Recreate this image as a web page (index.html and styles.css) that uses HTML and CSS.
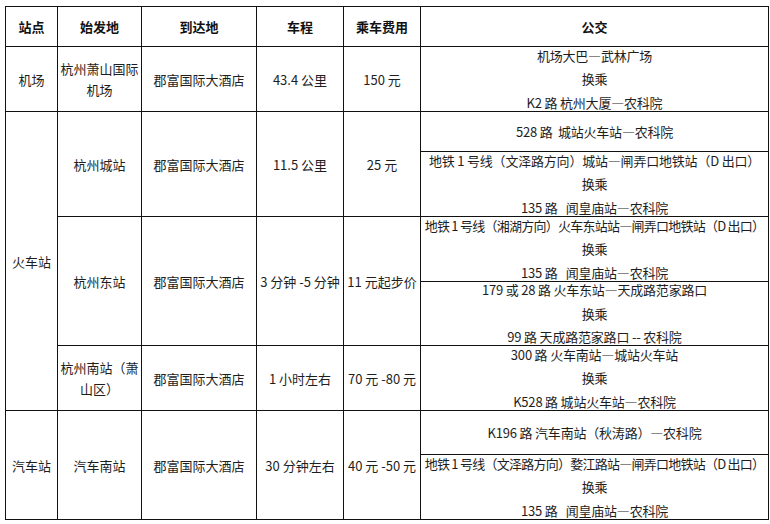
FILE: index.html
```html
<!DOCTYPE html>
<html lang="zh-CN">
<head>
<meta charset="utf-8">
<title>交通路线</title>
<link rel="stylesheet" href="styles.css">
</head>
<body>
<table class="routes">
  <colgroup>
    <col class="c-site">
    <col class="c-from">
    <col class="c-to">
    <col class="c-dist">
    <col class="c-fee">
    <col class="c-bus">
  </colgroup>
  <thead>
    <tr class="r-head">
      <th>站点</th><th>始发地</th><th>到达地</th><th>车程</th><th>乘车费用</th><th>公交</th>
    </tr>
  </thead>
  <tbody>
    <tr class="r-65">
      <td>机场</td>
      <td class="wrap">杭州萧山国际<br>机场</td>
      <td>郡富国际大酒店</td>
      <td>43.4 公里</td>
      <td>150 元</td>
      <td class="bus"><div class="lines"><span>机场大巴—武林广场</span><span>换乘</span><span>K2 路 杭州大厦—农科院</span></div></td>
    </tr>
    <tr class="r-40">
      <td rowspan="5">火车站</td>
      <td rowspan="2">杭州城站</td>
      <td rowspan="2">郡富国际大酒店</td>
      <td rowspan="2">11.5 公里</td>
      <td rowspan="2">25 元</td>
      <td class="bus">528 路&nbsp; 城站火车站—农科院</td>
    </tr>
    <tr class="r-65">
      <td class="bus"><div class="lines"><span>地铁 1 号线（文泽路方向）城站—闸弄口地铁站（D 出口）</span><span>换乘</span><span>135 路&nbsp;&nbsp; 闻皇庙站—农科院</span></div></td>
    </tr>
    <tr class="r-65">
      <td rowspan="2">杭州东站</td>
      <td rowspan="2">郡富国际大酒店</td>
      <td rowspan="2">3 分钟 -5 分钟</td>
      <td rowspan="2">11 元起步价</td>
      <td class="bus"><div class="lines"><span class="tight">地铁 1 号线（湘湖方向）火车东站站—闸弄口地铁站（D 出口）</span><span>换乘</span><span>135 路&nbsp;&nbsp; 闻皇庙站—农科院</span></div></td>
    </tr>
    <tr class="r-64">
      <td class="bus"><div class="lines"><span>179 或 28 路 火车东站—天成路范家路口</span><span>换乘</span><span>99 路 天成路范家路口 -- 农科院</span></div></td>
    </tr>
    <tr class="r-65">
      <td class="wrap">杭州南站（萧<br>山区）</td>
      <td>郡富国际大酒店</td>
      <td>1 小时左右</td>
      <td>70 元 -80 元</td>
      <td class="bus"><div class="lines"><span>300 路 火车南站—城站火车站</span><span>换乘</span><span>K528 路 城站火车站—农科院</span></div></td>
    </tr>
    <tr class="r-44">
      <td rowspan="2">汽车站</td>
      <td rowspan="2">汽车南站</td>
      <td rowspan="2">郡富国际大酒店</td>
      <td rowspan="2">30 分钟左右</td>
      <td rowspan="2">40 元 -50 元</td>
      <td class="bus">K196 路 汽车南站（秋涛路）—农科院</td>
    </tr>
    <tr class="r-65">
      <td class="bus"><div class="lines"><span class="tight">地铁 1 号线（文泽路方向）婺江路站—闸弄口地铁站（D 出口）</span><span>换乘</span><span>135 路&nbsp;&nbsp; 闻皇庙站—农科院</span></div></td>
    </tr>
  </tbody>
</table>
</body>
</html>
```
FILE: styles.css
```css
html, body {
  margin: 0;
  padding: 0;
  background: #ffffff;
}

body {
  font-family: "Noto Sans CJK SC", "Microsoft YaHei", sans-serif;
  font-size: 13px;
  color: #1e1e1e;
}

.routes {
  margin: 6px 0 0 5px;
  border-collapse: collapse;
  table-layout: fixed;
  width: 763px;
}

.c-site { width: 52px; }
.c-from { width: 84px; }
.c-to { width: 115px; }
.c-dist { width: 87px; }
.c-fee { width: 77px; }
.c-bus { width: 348px; }

.routes th,
.routes td {
  border: 1px solid #111111;
  padding: 0 2px;
  text-align: center;
  vertical-align: middle;
  white-space: nowrap;
  line-height: 21px;
  overflow: visible;
}

.routes th {
  font-weight: bold;
  color: #111111;
}

.routes td.bus {
  padding: 0;
  letter-spacing: -0.2px;
}

.lines {
  display: flex;
  flex-direction: column;
  align-items: center;
  margin: -4px 0;
}

.lines span {
  display: block;
  line-height: 23.5px;
  height: 23.5px;
}

.lines span.tight {
  letter-spacing: -0.75px;
}

.r-head { height: 40px; }
.r-65 { height: 65px; }
.r-64 { height: 64px; }
.r-40 { height: 40px; }
.r-44 { height: 44px; }
```
